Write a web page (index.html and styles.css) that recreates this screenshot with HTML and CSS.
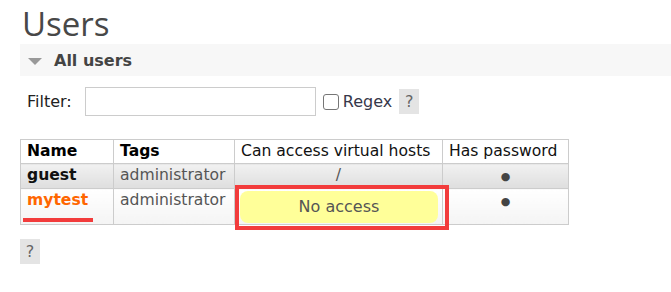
FILE: index.html
```html
<!DOCTYPE html>
<html lang="en">
<head>
  <meta charset="UTF-8" />
  <title>Users</title>
  <link rel="stylesheet" href="styles.css">
</head>
<body>
  <div class="page">
    <h1>Users</h1>

    <div class="section-head">
      <span class="toggle"></span>
      <h2>All users</h2>
    </div>

    <div class="filter-row">
      <label for="filter">Filter:</label>
      <input type="text" id="filter" class="filter-input">
      <input type="checkbox" id="regex" class="regex-box">
      <label for="regex" class="regex-label">Regex</label>
      <span class="help">?</span>
    </div>

    <table class="list">
      <thead>
        <tr>
          <th class="col-name bold">Name</th>
          <th class="col-tags bold">Tags</th>
          <th class="col-vhosts">Can access virtual hosts</th>
          <th class="col-pass">Has password</th>
        </tr>
      </thead>
      <tbody>
        <tr class="alt1">
          <td class="name">guest</td>
          <td>administrator</td>
          <td class="c">/</td>
          <td class="c"><span class="dot">&#9679;</span></td>
        </tr>
        <tr class="alt2">
          <td class="name"><span class="marked">mytest</span></td>
          <td>administrator</td>
          <td class="vhost-cell">
            <div class="warning">No access</div>
            <div class="highlight"></div>
          </td>
          <td class="c"><span class="dot">&#9679;</span></td>
        </tr>
      </tbody>
    </table>

    <span class="help help-bottom">?</span>
  </div>
</body>
</html>
```

FILE: styles.css
```css
body {
  margin: 0;
  font-family: "DejaVu Sans", Verdana, sans-serif;
  font-size: 16px;
  color: #333;
  background: #fff;
}

.page {
  padding: 4px 0 0 20px;
}

h1 {
  margin: 0 0 0 2px;
  font-family: "Open Sans", sans-serif;
  font-weight: 400;
  font-size: 33px;
  line-height: 40px;
  color: #484848;
}

.section-head {
  display: flex;
  align-items: center;
  height: 32px;
  background: #f7f7f7;
  padding-left: 8px;
}

.toggle {
  width: 0;
  height: 0;
  border-left: 7px solid transparent;
  border-right: 7px solid transparent;
  border-top: 7px solid #999;
  margin-top: 2px;
}

.section-head h2 {
  margin: 0 0 0 12px;
  font-size: 16px;
  font-weight: bold;
  color: #444;
}

.filter-row {
  display: flex;
  align-items: center;
  margin-top: 11px;
  padding-left: 7px;
}

.filter-row label {
  color: #222;
}

.filter-input {
  box-sizing: border-box;
  width: 231px;
  height: 29px;
  margin: 0 0 0 13px;
  border: 1px solid #ccc;
  font: inherit;
}

.regex-box {
  appearance: none;
  box-sizing: border-box;
  width: 16px;
  height: 16px;
  margin: 0 4px 0 7px;
  border: 1px solid #767676;
  border-radius: 3px;
  background: #fff;
}

.filter-row .regex-label {
  color: #36384a;
}

.help {
  display: inline-block;
  width: 20px;
  height: 25px;
  line-height: 25px;
  text-align: center;
  background: #e4e4e4;
  color: #666;
  font-size: 16px;
  margin-left: 7px;
}

.list {
  margin-top: 23px;
  border-collapse: collapse;
  font-size: 15.6px;
}

.list th,
.list td {
  border: 1px solid #ccc;
  padding: 3px 6px;
  text-align: left;
  vertical-align: top;
  line-height: 17px;
  white-space: nowrap;
}

.list th {
  font-weight: normal;
  color: #111;
  background: #fff;
}

.list th.bold {
  font-weight: bold;
  color: #000;
}

.col-name { width: 80px; }
.col-tags { width: 108px; }
.col-vhosts { width: 195px; }
.col-pass { width: 113px; }

.list td {
  color: #555;
}

.list td.c {
  text-align: center;
}

.list td.name {
  font-weight: bold;
  color: #111;
}

.alt1 td {
  background: linear-gradient(#f1f1f1, #dedede);
}

.alt2 td {
  background: linear-gradient(#fff, #f4f4f4);
}

.marked {
  position: relative;
  color: #ff6600;
}

.marked::after {
  content: "";
  position: absolute;
  left: -4px;
  right: -5px;
  top: 27px;
  height: 4px;
  background: #f23c3c;
}

.dot {
  font-size: 11px;
  color: #444;
}

.list td.vhost-cell {
  position: relative;
  padding: 2px 4px 1px 5px;
}

.warning {
  height: 32px;
  line-height: 32px;
  text-align: center;
  background: #ffff99;
  border-radius: 8px;
  font-size: 16px;
  color: #555;
}

.highlight {
  position: absolute;
  left: 0;
  top: -4px;
  right: -7px;
  bottom: -6px;
  border: 4px solid #f23c3c;
}

.help-bottom {
  margin: 14px 0 0 0;
}
```
